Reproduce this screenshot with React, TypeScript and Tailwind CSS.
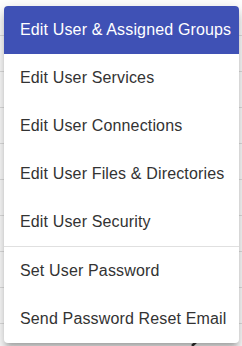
import React from "react";

const items = [
  "Edit User Services",
  "Edit User Connections",
  "Edit User Files & Directories",
  "Edit User Security",
];
const items2 = ["Set User Password", "Send Password Reset Email"];

export default function App() {
  const lines = [35, 71, 107, 143, 179, 215, 251, 287, 323];
  return (
    <div
      className="relative w-[242px] h-[346px] overflow-hidden bg-white tracking-[0.15px]"
      style={{ fontFamily: '"Liberation Sans", Arial, sans-serif' }}
    >
      {lines.map((y) => (
        <div key={y} className="absolute left-0 right-0 h-px bg-[#e0e0e0]" style={{ top: y }} />
      ))}
      <svg className="absolute left-[188px] top-[338px]" width="16" height="8" viewBox="0 0 16 8">
        <path d="M4 8 L9 3" stroke="#333" strokeWidth="2.5" />
      </svg>
      <div className="absolute left-[4px] top-[6px] w-[235px] rounded bg-white shadow-[0px_5px_5px_-3px_rgba(0,0,0,0.2),0px_8px_10px_1px_rgba(0,0,0,0.14),0px_3px_14px_2px_rgba(0,0,0,0.12)] overflow-hidden">
        <div className="flex h-12 items-center bg-[#3f51b5] pl-4 text-[16px] text-white whitespace-nowrap">
          Edit User &amp; Assigned Groups
        </div>
        {items.map((t) => (
          <div key={t} className="flex h-12 items-center pl-4 text-[16px] text-[#333333] whitespace-nowrap">
            {t}
          </div>
        ))}
        <div className="h-px bg-[#e0e0e0]" />
        {items2.map((t) => (
          <div key={t} className="flex h-12 items-center pl-4 text-[16px] text-[#333333] whitespace-nowrap">
            {t}
          </div>
        ))}
      </div>
    </div>
  );
}
